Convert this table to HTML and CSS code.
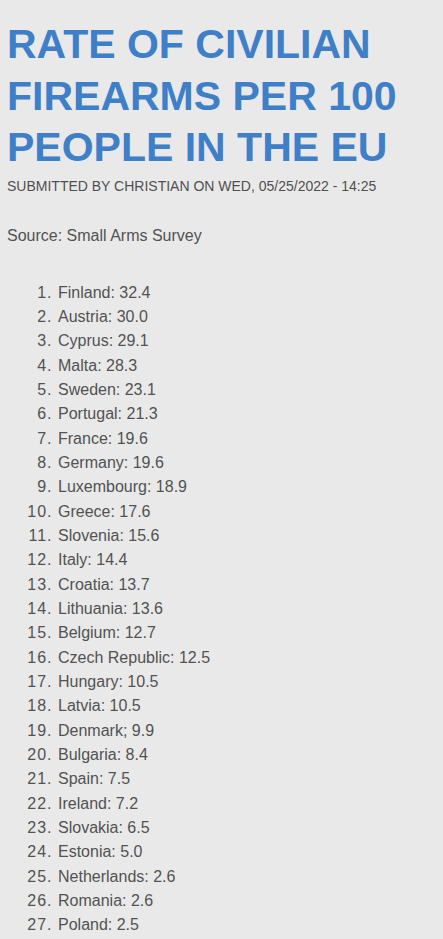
FILE: index.html
```html
<!DOCTYPE html>
<html lang="en">
<head>
    <meta charset="UTF-8">
    <meta name="viewport" content="width=device-width, initial-scale=1.0">
    <title>Rate of civilian firearms per 100 people in the EU</title>
    <link rel="stylesheet" href="styles.css">
</head>
<body>
    <div class="post">
        <h1 class="post-title">Rate of civilian firearms per 100 people in the EU</h1>
        <div class="submitted">Submitted by Christian on Wed, 05/25/2022 - 14:25</div>

        <div class="post-body">
            <p class="source">Source: Small Arms Survey</p>

            <ol class="rates">
                <li>Finland: 32.4</li>
                <li>Austria: 30.0</li>
                <li>Cyprus: 29.1</li>
                <li>Malta: 28.3</li>
                <li>Sweden: 23.1</li>
                <li>Portugal: 21.3</li>
                <li>France: 19.6</li>
                <li>Germany: 19.6</li>
                <li>Luxembourg: 18.9</li>
                <li>Greece: 17.6</li>
                <li>Slovenia: 15.6</li>
                <li>Italy: 14.4</li>
                <li>Croatia: 13.7</li>
                <li>Lithuania: 13.6</li>
                <li>Belgium: 12.7</li>
                <li>Czech Republic: 12.5</li>
                <li>Hungary: 10.5</li>
                <li>Latvia: 10.5</li>
                <li>Denmark; 9.9</li>
                <li>Bulgaria: 8.4</li>
                <li>Spain: 7.5</li>
                <li>Ireland: 7.2</li>
                <li>Slovakia: 6.5</li>
                <li>Estonia: 5.0</li>
                <li>Netherlands: 2.6</li>
                <li>Romania: 2.6</li>
                <li>Poland: 2.5</li>
            </ol>
        </div>
    </div>
</body>
</html>
```

FILE: styles.css
```css
body {
    margin: 0;
    padding: 0;
    background-color: #e9e9e9;
    font-family: "Liberation Sans", Arial, sans-serif;
    color: #525252;
}
.post {
    padding: 0 7px;
}
.post-title {
    margin: 19px 0 0;
    font-size: 41px;
    line-height: 51.5px;
    font-weight: bold;
    text-transform: uppercase;
    color: #3e7fc7;
}
.submitted {
    margin-top: 2px;
    font-size: 14px;
    line-height: 20px;
    text-transform: uppercase;
    color: #505050;
}
.source {
    margin: 28px 0 0;
    font-size: 16px;
    line-height: 24px;
}
.rates {
    margin: 33px 0 0;
    padding-left: 51px;
    font-size: 16px;
    line-height: 24.35px;
}
.rates li::marker {
    letter-spacing: 1px;
}
```
